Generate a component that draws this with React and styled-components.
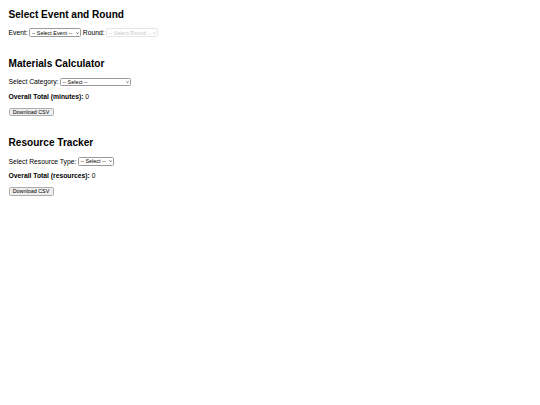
import React, { useState } from "react";
import styled, { createGlobalStyle } from "styled-components";

const GlobalStyle = createGlobalStyle`
  html, body {
    margin: 0;
    background: #fff;
  }
  body {
    font-family: "Liberation Sans", Arial, sans-serif;
    font-size: 6.75px;
    color: #000;
  }
`;

const Page = styled.div`
  padding: 8.5px;
`;

const Section = styled.section`
  margin-bottom: 20.7px;
`;

const Heading = styled.h2`
  margin: 0 0 8.4px;
  font-size: 10.1px;
  line-height: 11.6px;
  font-weight: bold;
`;

const Field = styled.div`
  display: flex;
  align-items: center;
  gap: 1.6px;
  height: 8.6px;
`;

const Label = styled.label`
  line-height: 7.8px;
`;

const SelectWrap = styled.span`
  position: relative;
  display: inline-flex;
  width: ${(p) => p.$w}px;
  height: 8.6px;
  opacity: ${(p) => (p.$disabled ? 0.35 : 1)};
`;

const Select = styled.select`
  appearance: none;
  width: 100%;
  height: 100%;
  margin: 0;
  padding: 0 5px 0 1.5px;
  font-family: "Liberation Sans", Arial, sans-serif;
  font-size: 5.4px;
  color: #000;
  background: #fff;
  border: 1px solid #9a9a9a;
  border-radius: 1.5px;
  outline: none;
`;

const Chevron = styled.svg`
  position: absolute;
  right: 1.8px;
  top: 3.1px;
  width: 3.2px;
  height: 2.2px;
  pointer-events: none;
`;

const Total = styled.p`
  margin: 6.75px 0;
  line-height: 7.8px;
`;

const Button = styled.button`
  display: block;
  width: 45px;
  height: 8.8px;
  padding: 0;
  font-family: "Liberation Sans", Arial, sans-serif;
  font-size: 5.4px;
  line-height: 7px;
  color: #000;
  background: #efefef;
  border: 1px solid #ababab;
  border-radius: 1.5px;
`;

function Dropdown({ width, disabled, value, onChange, children }) {
  return (
    <SelectWrap $w={width} $disabled={disabled}>
      <Select value={value} onChange={onChange} disabled={disabled}>
        {children}
      </Select>
      <Chevron viewBox="0 0 8 5">
        <path d="M0.8 0.8 L4 4 L7.2 0.8" fill="none" stroke="#000" strokeWidth="1.6" />
      </Chevron>
    </SelectWrap>
  );
}

export default function App() {
  const [event, setEvent] = useState("");
  const [category, setCategory] = useState("");
  const [resource, setResource] = useState("");

  return (
    <>
      <GlobalStyle />
      <Page>
        <Section>
          <Heading>Select Event and Round</Heading>
          <Field>
            <Label>Event:</Label>
            <Dropdown width={52} value={event} onChange={(e) => setEvent(e.target.value)}>
              <option value="">-- Select Event --</option>
            </Dropdown>
            <Label>Round:</Label>
            <Dropdown width={52} value="" disabled>
              <option value="">-- Select Round --</option>
            </Dropdown>
          </Field>
        </Section>

        <Section>
          <Heading>Materials Calculator</Heading>
          <Field>
            <Label>Select Category:</Label>
            <Dropdown width={71} value={category} onChange={(e) => setCategory(e.target.value)}>
              <option value="">-- Select --</option>
            </Dropdown>
          </Field>
          <Total>
            <strong>Overall Total (minutes):</strong> 0
          </Total>
          <Button>Download CSV</Button>
        </Section>

        <Section>
          <Heading>Resource Tracker</Heading>
          <Field>
            <Label>Select Resource Type:</Label>
            <Dropdown width={36} value={resource} onChange={(e) => setResource(e.target.value)}>
              <option value="">-- Select --</option>
            </Dropdown>
          </Field>
          <Total>
            <strong>Overall Total (resources):</strong> 0
          </Total>
          <Button>Download CSV</Button>
        </Section>
      </Page>
    </>
  );
}
